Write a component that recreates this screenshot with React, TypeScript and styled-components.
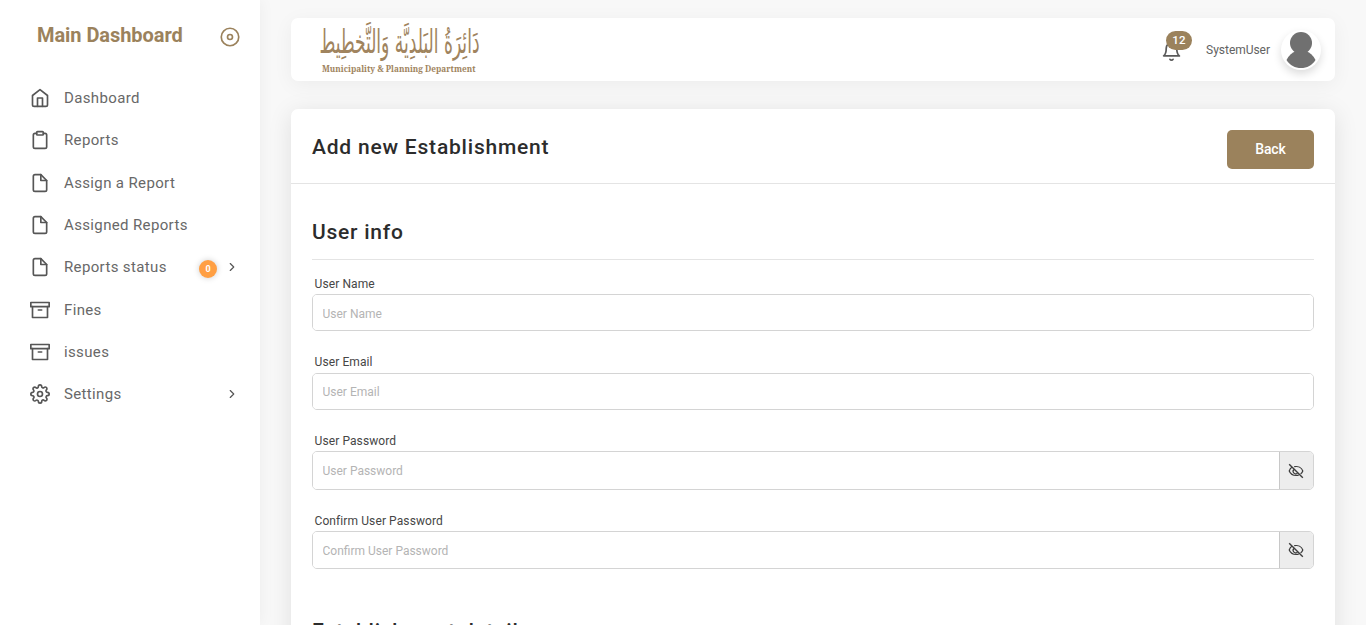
import React from "react";
import styled, { createGlobalStyle } from "styled-components";
import {
  FiHome, FiClipboard, FiFile, FiArchive, FiSettings, FiChevronRight, FiBell,
} from "react-icons/fi";

const GlobalStyle = createGlobalStyle`
  * { box-sizing: border-box; }
  html, body { margin: 0; height: 100%; overflow: hidden; }
  body { background: #f8f8f8; font-family: Roboto, "Liberation Sans", sans-serif; color: #626262; }
`;

const Page = styled.div`
  display: flex;
  height: 100vh;
  overflow: hidden;
`;

const Sidebar = styled.aside`
  flex: 0 0 260px;
  background: #fff;
  box-shadow: 0 0 15px rgba(0, 0, 0, 0.05);
`;

const Brand = styled.div`
  display: flex;
  justify-content: space-between;
  padding: 22px 20px 0 37px;
  height: 77px;
  color: #9b825c;
`;

const BrandName = styled.div`
  font-size: 20px;
  font-weight: 700;
  line-height: 26px;
  letter-spacing: -0.06px;
`;

const Toggle = styled.svg`
  width: 20px;
  height: 20px;
  margin-top: 5px;
  fill: none;
  stroke: currentColor;
  stroke-width: 2;
`;

const Menu = styled.nav`
  display: flex;
  flex-direction: column;
`;

const MenuItem = styled.a`
  display: flex;
  align-items: center;
  height: 42.3px;
  padding: 0 21px 0 30px;
  color: #565656;
  font-size: 15px;
  letter-spacing: 0.36px;

  > svg:first-child {
    width: 20px;
    height: 20px;
    margin-right: 14px;
  }
`;

const MenuLabel = styled.span`
  flex: 1;
  color: #686868;
`;

const Count = styled.span`
  width: 18px;
  height: 18px;
  margin: 3px 8px 0 0;
  border-radius: 50%;
  background: #ff9f43;
  box-shadow: 0 0 6px rgba(0, 0, 0, 0.2);
  color: #fff;
  font-size: 9px;
  font-weight: 700;
  line-height: 18px;
  text-align: center;
  letter-spacing: 0;
`;

const Main = styled.main`
  flex: 1;
  display: flex;
  flex-direction: column;
  gap: 28px;
  padding: 18px 31px 0;
`;

const Header = styled.header`
  flex: 0 0 63px;
  display: flex;
  align-items: center;
  padding: 0 14px 0 28px;
  border-radius: 7px;
  background: #fff;
  box-shadow: 0 4px 20px rgba(0, 0, 0, 0.05);
`;

const Logo = styled.svg`
  width: 164px;
  height: 56px;
  margin-right: auto;
  fill: #a0845e;
`;

const BellButton = styled.div`
  position: relative;
  width: 21px;
  height: 21px;
  margin: 4px 24px 0 0;
  color: #5a5a5a;
`;

const BellCount = styled.span`
  position: absolute;
  top: -10px;
  left: 5px;
  width: 26px;
  height: 19px;
  border-radius: 10px;
  background: #9b825c;
  color: #fff;
  font-size: 11.5px;
  font-weight: 500;
  line-height: 19px;
  text-align: center;
  letter-spacing: 0.3px;
`;

const UserName = styled.span`
  font-size: 12px;
  letter-spacing: -0.03px;
  margin-right: 11px;
`;

const Avatar = styled.svg`
  width: 40px;
  height: 40px;
  border-radius: 50%;
  background: #fff;
  box-shadow: 0 4px 8px rgba(0, 0, 0, 0.14);
  fill: #707070;
`;

const Card = styled.section`
  height: 700px;
  border-radius: 7px 7px 0 0;
  background: #fff;
  box-shadow: 0 4px 25px rgba(0, 0, 0, 0.1);
`;

const CardHeader = styled.div`
  display: flex;
  justify-content: space-between;
  height: 75px;
  padding: 21px 21px 0;
  border-bottom: 1px solid #e4e4e4;
`;

const Title = styled.h1`
  margin: 3px 0 0;
  color: #2c2c2c;
  font-size: 21px;
  font-weight: 500;
  line-height: 28px;
  letter-spacing: 0.79px;
`;

const BackButton = styled.button`
  width: 87px;
  height: 39px;
  padding: 0 0 2px;
  border: 0;
  border-radius: 5px;
  background: #9b825c;
  color: #fff;
  font: 500 14px Roboto, sans-serif;
  letter-spacing: -0.1px;
`;

const Form = styled.form`
  padding: 0 21px;
`;

const SectionTitle = styled.h2<{ $top: number }>`
  height: 42px;
  margin: ${(p) => p.$top}px 0 0;
  border-bottom: 1px solid #e4e4e4;
  color: #2c2c2c;
  font-size: 21px;
  font-weight: 500;
  line-height: 28px;
  letter-spacing: 0.75px;
`;

const Field = styled.div<{ $top: number }>`
  margin-top: ${(p) => p.$top}px;
`;

const Label = styled.label<{ $height: number }>`
  display: block;
  height: ${(p) => p.$height}px;
  padding-left: 2.5px;
  color: #464646;
  font-size: 12px;
  line-height: 16px;
  letter-spacing: 0.1px;
`;

const InputRow = styled.div<{ $height: number }>`
  display: flex;
  height: ${(p) => p.$height}px;
  border: 1px solid #d4d4d4;
  border-radius: 5px;
  overflow: hidden;
`;

const Input = styled.input<{ $shift: number }>`
  flex: 1;
  min-width: 0;
  padding: ${(p) => p.$shift}px 9.5px 0;
  border: 0;
  background: #fff;
  font: 12px Roboto, sans-serif;

  &::placeholder { color: #b4b4b4; }
`;

const Reveal = styled.span`
  flex: 0 0 34px;
  display: flex;
  align-items: center;
  justify-content: center;
  padding-right: 2px;
  border-left: 1px solid #c8c8c8;
  background: #ededed;
  color: #3c3c3c;
`;

const EyeOff = () => (
  <svg width="16" height="16" viewBox="0 0 16 16" fill="none" stroke="currentColor" strokeWidth="1.2">
    <path d="M4.2 4.100C2.700 5 1.700 6.500 1.200 8c1.100 2.500 3.800 4.500 6.800 4.500 1 0 2-.2 2.900-.5M6.200 3.700c3.800-.8 7.400 1 8.600 4.300-.4 1.200-1.200 2.200-2.200 3" />
    <path d="M5.900 6.500a2.500 2.500 0 0 0 3.600 3.600" />
    <path d="M1.200 1.200 14.800 14.800" strokeWidth="1.400" />
  </svg>
);

const menu = [
  { label: "Dashboard", Icon: FiHome },
  { label: "Reports", Icon: FiClipboard },
  { label: "Assign a Report", Icon: FiFile },
  { label: "Assigned Reports", Icon: FiFile },
  { label: "Reports status", Icon: FiFile, count: 0, nested: true },
  { label: "Fines", Icon: FiArchive },
  { label: "issues", Icon: FiArchive },
  { label: "Settings", Icon: FiSettings, nested: true },
];

const fields = [
  { label: "User Name", top: 16, labelHeight: 18, height: 37, shift: 2 },
  { label: "User Email", top: 23, labelHeight: 19, height: 37, shift: 0 },
  { label: "User Password", top: 23, labelHeight: 18, height: 39, shift: 0, secret: true },
  { label: "Confirm User Password", top: 23, labelHeight: 18, height: 38, shift: 2, secret: true },
];

export default function App() {
  return (
    <Page>
      <GlobalStyle />
      <Sidebar>
        <Brand>
          <BrandName>Main Dashboard</BrandName>
          <Toggle viewBox="0 0 24 24">
            <circle cx="12" cy="12" r="10.500" />
            <circle cx="12" cy="12" r="3" />
          </Toggle>
        </Brand>
        <Menu>
          {menu.map(({ label, Icon, count, nested }) => (
            <MenuItem key={label}>
              <Icon />
              <MenuLabel>{label}</MenuLabel>
              {count !== undefined && <Count>{count}</Count>}
              {nested && <FiChevronRight size={14} />}
            </MenuItem>
          ))}
        </Menu>
      </Sidebar>
      <Main>
        <Header>
          <Logo viewBox="0 0 164 56">
            <text
              x="0" y="0" transform="translate(80.5 31) scale(1 2.050)" textAnchor="middle" direction="rtl"
              fontFamily="DejaVu Sans" fontSize="16" textLength="160" lengthAdjust="spacingAndGlyphs"
            >
              دَائِرَةُ البَلدِيَّة وَالتَّخطِيط
            </text>
            <text
              x="3" y="50" fontFamily="Noto Serif, DejaVu Serif" fontWeight="700" fontSize="8.500"
              textLength="153.500" lengthAdjust="spacingAndGlyphs"
            >
              Municipality &amp; Planning Department
            </text>
          </Logo>
          <BellButton>
            <FiBell size={21} />
            <BellCount>12</BellCount>
          </BellButton>
          <UserName>SystemUser</UserName>
          <Avatar viewBox="0 0 40 40">
            <circle cx="20" cy="13" r="11" />
            <path d="M5.500 30C7.500 26 11 22.500 15 21h10c4 1.500 7.500 5 9.500 9C31 35.500 26 38 20 38S9 35.500 5.500 30Z" />
          </Avatar>
        </Header>
        <Card>
          <CardHeader>
            <Title>Add new Establishment</Title>
            <BackButton>Back</BackButton>
          </CardHeader>
          <Form>
            <SectionTitle $top={34}>User info</SectionTitle>
            {fields.map((f) => (
              <Field key={f.label} $top={f.top}>
                <Label $height={f.labelHeight}>{f.label}</Label>
                <InputRow $height={f.height}>
                  <Input $shift={f.shift} placeholder={f.label} type={f.secret ? "password" : "text"} />
                  {f.secret && <Reveal><EyeOff /></Reveal>}
                </InputRow>
              </Field>
            ))}
            <SectionTitle $top={48}>Establishment details</SectionTitle>
          </Form>
        </Card>
      </Main>
    </Page>
  );
}
